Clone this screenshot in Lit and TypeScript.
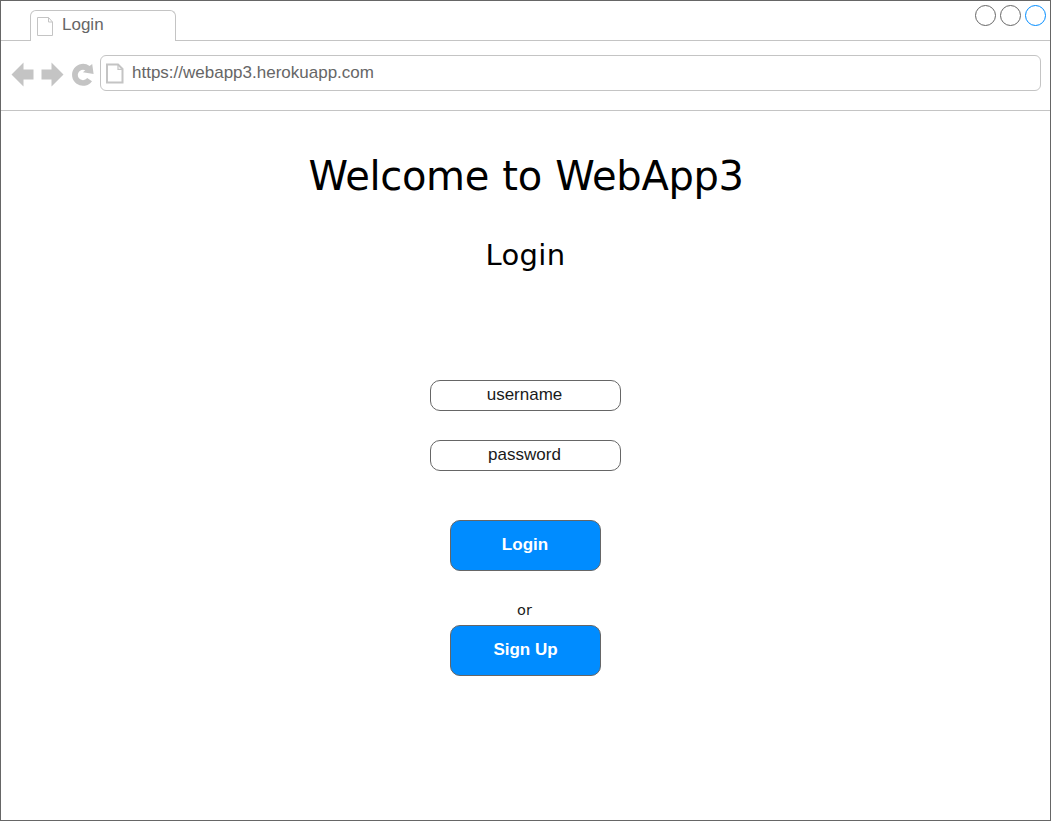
import { LitElement, html, css } from "lit";
import { customElement } from "lit/decorators.js";

@customElement("app-root")
export class AppRoot extends LitElement {
  static styles = css`
    :host {
      display: block;
      width: 1051px;
      height: 821px;
      font-family: "Liberation Sans", Arial, sans-serif;
      font-size: 17px;
      line-height: 20px;
      color: #1a1a1a;
    }
    * { box-sizing: border-box; }
    svg { display: block; flex: none; }
    .window {
      height: 821px;
      border: 1px solid #666;
      background: #fff;
      display: flex;
      flex-direction: column;
    }
    .tabs { display: flex; height: 40px; flex: none; }
    .edge { width: 29px; border-bottom: 1px solid #c4c4c4; }
    .tab {
      width: 146px;
      height: 31px;
      margin-top: 9px;
      padding: 5px 0 0 5px;
      border: 1px solid #c4c4c4;
      border-bottom: 0;
      border-radius: 6px 6px 0 0;
      display: flex;
      gap: 8px;
      color: #666;
    }
    .tab-label { margin-top: -1px; }
    .rest {
      flex: 1;
      border-bottom: 1px solid #c4c4c4;
      display: flex;
      justify-content: flex-end;
      gap: 4px;
      padding: 4px 4px 0 0;
    }
    .dot { width: 21px; height: 21px; border-radius: 50%; border: 1px solid #666; }
    .dot.active { border-color: #008cff; }
    .toolbar {
      flex: none;
      height: 70px;
      border-bottom: 1px solid #c4c4c4;
      padding: 14px 9px 0 9px;
      display: flex;
      gap: 4px;
    }
    .address {
      flex: 1;
      height: 36px;
      border: 1px solid #c4c4c4;
      border-radius: 6px;
      padding: 7px 0 0 5px;
      display: flex;
      gap: 8px;
      color: #666;
    }
    .page { display: flex; flex-direction: column; align-items: center; flex: 1; }
    h1, h2 {
      margin: 0;
      font-family: "DejaVu Sans", Verdana, sans-serif;
      font-weight: 400;
      color: #000;
    }
    h1 {
      font-size: 40px;
      line-height: 48px;
      letter-spacing: -0.34px;
      word-spacing: 1px;
      margin-top: 41px;
      padding-left: 1px;
    }
    h2 { font-size: 29px; line-height: 36px; letter-spacing: 0.35px; margin-top: 37px; }
    .field {
      width: 191px;
      height: 31px;
      border: 1px solid #666;
      border-radius: 10px;
      text-align: center;
      padding: 4px 2px 0 0;
    }
    .user { margin-top: 107px; }
    .pass { margin-top: 29px; }
    .btn {
      width: 151px;
      height: 51px;
      border: 1px solid #666;
      border-radius: 10px;
      background: #008cff;
      color: #fff;
      font: bold 17px/20px "Liberation Sans", Arial, sans-serif;
      text-align: center;
      padding: 0 0 2px;
    }
    .login { margin-top: 49px; padding-right: 1px; }
    .or {
      font-family: "DejaVu Sans", Verdana, sans-serif;
      font-size: 14.5px;
      line-height: 20px;
      margin: 29px 0 5px;
      padding-right: 2px;
    }
  `;

  render() {
    return html`
      <div class="window">
        <div class="tabs">
          <div class="edge"></div>
          <div class="tab">
            <svg width="18" height="20" viewBox="0 0 18 20" fill="none" stroke="#c4c4c4">
              <path d="M1.5 1.5h11l4 4.5v13.5h-15zM12.5 1.5v4.5h4" />
            </svg>
            <span class="tab-label">Login</span>
          </div>
          <div class="rest">
            <span class="dot"></span><span class="dot"></span><span class="dot active"></span>
          </div>
        </div>
        <div class="toolbar">
          <svg width="86" height="40" viewBox="0 0 86 40" fill="#c4c4c4">
            <path d="M1.5 19.5 13.5 7.5v7h10v10h-10v7z" />
            <path d="M53.5 19.5 41.5 7.5v7h-10v10h10v7z" />
            <path d="M79.6 11 82.2 9 83.6 19 72.9 17.2 75.3 15.3A5.2 5.2 0 1 0 77.2 23L82 26.2A11 11 0 1 1 79.6 11z" />
          </svg>
          <div class="address">
            <svg width="18" height="22" viewBox="0 0 18 22" fill="none" stroke="#c4c4c4" stroke-width="2">
              <path d="M1 1.5h11l4.5 4.5v13.5H1z" />
              <path d="M12 1.5v4.8h4.5" stroke-width="1.2" />
            </svg>
            <span>https://webapp3.herokuapp.com</span>
          </div>
        </div>
        <div class="page">
          <h1>Welcome to WebApp3</h1>
          <h2>Login</h2>
          <div class="field user">username</div>
          <div class="field pass">password</div>
          <button class="btn login">Login</button>
          <div class="or">or</div>
          <button class="btn">Sign Up</button>
        </div>
      </div>
    `;
  }
}
